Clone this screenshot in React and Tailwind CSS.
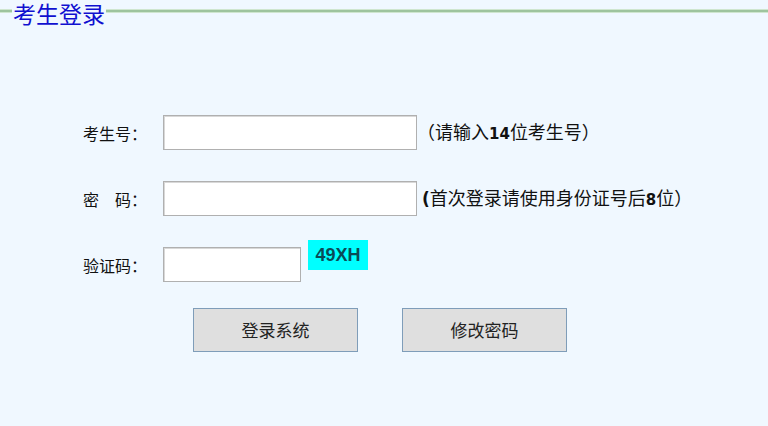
import React from "react";

function Row({ label, children, className = "" }) {
  return (
    <div className={"flex items-center " + className}>
      <div className="w-[163px] pl-[83px] text-[16px] leading-[20px] text-[#111]">{label}</div>
      {children}
    </div>
  );
}

const inputCls =
  "h-[35px] bg-white border border-[#b0b0b0] shadow-[inset_1px_1px_0_#d8d8d8] outline-none";
const btnCls =
  "w-[165px] h-[44px] bg-[#dfdfdf] border border-[#7f9db9] text-[17px] text-[#222]";

export default function App() {
  return (
    <div className="w-[768px] h-[426px] bg-[#f0f8ff] overflow-hidden font-['Noto_Sans_CJK_SC','Noto_Sans',sans-serif]">
      <div className="flex items-start h-[26px] pt-[2px]">
        <div className="mt-[7px] w-[12px] h-[4px] bg-[#9ec49e] border-y border-[#cfe6cf]" />
        <div className="px-[1px] text-[23px] leading-[23px] text-[#1010d0]">考生登录</div>
        <div className="mt-[7px] flex-1 h-[4px] bg-[#9ec49e] border-y border-[#cfe6cf]" />
      </div>

      <div className="pt-[89px]">
        <Row label="考生号：">
          <input className={"w-[254px] " + inputCls} />
          <div className="text-[18px] leading-[20px] text-[#111]">
            （请输入<b className="font-['DejaVu_Sans',sans-serif] text-[15px]">14</b>位考生号）
          </div>
        </Row>

        <Row label="密　码：" className="mt-[31px]">
          <input className={"w-[254px] " + inputCls} />
          <div className="pl-[5px] text-[18px] leading-[20px] text-[#111]">
            <b className="font-['DejaVu_Sans',sans-serif] text-[17px]">(</b>首次登录请使用身份证号后
            <b className="font-['DejaVu_Sans',sans-serif] text-[15px]">8</b>位）
          </div>
        </Row>

        <div className="flex items-start mt-[24px]">
          <div className="w-[163px] pl-[83px] pt-[15px] text-[16px] leading-[20px] text-[#111]">验证码：</div>
          <input className={"mt-[7px] w-[138px] " + inputCls} />
          <div className="ml-[7px] w-[60px] h-[30px] bg-[#00ffff] text-[#0a4b57] font-bold text-[18px] leading-[18px] pt-[6px] text-center font-['Liberation_Sans',sans-serif]">
            49XH
          </div>
        </div>

        <div className="flex pl-[193px] gap-[44px] mt-[26px]">
          <button className={btnCls}>登录系统</button>
          <button className={btnCls}>修改密码</button>
        </div>
      </div>
    </div>
  );
}
